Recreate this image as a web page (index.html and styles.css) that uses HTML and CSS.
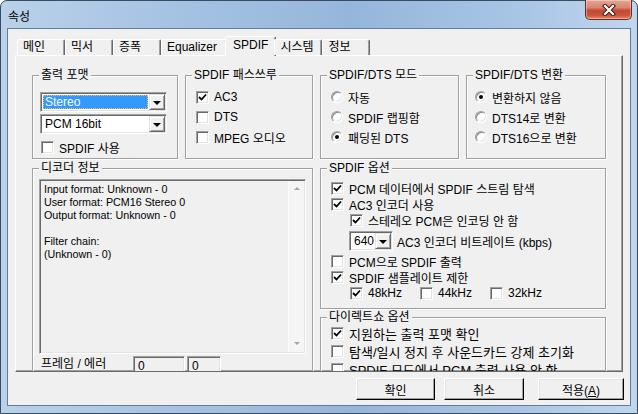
FILE: index.html
```html
<!DOCTYPE html>
<html lang="ko">
<head>
    <meta charset="UTF-8">
    <meta name="viewport" content="width=device-width, initial-scale=1.0">
    <title>속성</title>
    <link rel="stylesheet" href="styles.css">
</head>
<body>
<div class="window">
    <div class="titlebar">
        <span class="title">속성</span>
        <div class="close">
            <svg width="14" height="12" viewBox="0 0 14 12">
                <path d="M3 2 L11 10 M11 2 L3 10" stroke="#3b1a12" stroke-width="4.2" stroke-linecap="square"/>
                <path d="M3 2 L11 10 M11 2 L3 10" stroke="#fff" stroke-width="2.2" stroke-linecap="square"/>
            </svg>
        </div>
    </div>
    <div class="client">
        <div class="tabs">
            <div class="tab">메인</div>
            <div class="tab">믹서</div>
            <div class="tab">증폭</div>
            <div class="tab eq">Equalizer</div>
            <div class="tab active">SPDIF</div>
            <div class="tab">시스템</div>
            <div class="tab">정보</div>
        </div>
        <div class="page">
            <div class="row-top">
                <fieldset class="group">
                    <legend>출력 포맷</legend>
                    <div class="body g-format">
                        <div class="combo wide">
                            <span class="value focus">Stereo</span>
                            <span class="drop"><i></i></span>
                        </div>
                        <div class="combo wide second">
                            <span class="value">PCM 16bit</span>
                            <span class="drop"><i></i></span>
                        </div>
                        <div class="item use"><span class="box"></span>SPDIF 사용</div>
                    </div>
                </fieldset>
                <fieldset class="group">
                    <legend>SPDIF 패스쓰루</legend>
                    <div class="body g-list">
                        <div class="item"><span class="box"><svg viewBox="0 0 9 9"><path d="M1 4 L3.5 6.5 L8 1.5" fill="none" stroke="#000" stroke-width="1.8"/></svg></span>AC3</div>
                        <div class="item"><span class="box"></span>DTS</div>
                        <div class="item"><span class="box"></span>MPEG 오디오</div>
                    </div>
                </fieldset>
                <fieldset class="group">
                    <legend>SPDIF/DTS 모드</legend>
                    <div class="body g-list">
                        <div class="item"><span class="radio"></span>자동</div>
                        <div class="item"><span class="radio"></span>SPDIF 랩핑함</div>
                        <div class="item"><span class="radio on"></span>패딩된 DTS</div>
                    </div>
                </fieldset>
                <fieldset class="group">
                    <legend>SPDIF/DTS 변환</legend>
                    <div class="body g-list g-conv">
                        <div class="item"><span class="radio on"></span>변환하지 않음</div>
                        <div class="item"><span class="radio"></span>DTS14로 변환</div>
                        <div class="item"><span class="radio"></span>DTS16으로 변환</div>
                    </div>
                </fieldset>
            </div>
            <div class="row-bottom">
                <fieldset class="group decoder">
                    <legend>디코더 정보</legend>
                    <div class="body g-decoder">
                        <div class="listbox">
                            <div class="lines">
                                <div>Input format: Unknown - 0</div>
                                <div>User format: PCM16 Stereo 0</div>
                                <div>Output format: Unknown - 0</div>
                                <div>&nbsp;</div>
                                <div>Filter chain:</div>
                                <div>(Unknown - 0)</div>
                            </div>
                            <div class="vscroll">
                                <span class="arrow up"></span>
                                <span class="arrow down"></span>
                            </div>
                        </div>
                        <div class="frames">
                            <span class="frames-label">프레임 / 에러</span>
                            <span class="edit first">0</span>
                            <span class="edit">0</span>
                        </div>
                    </div>
                </fieldset>
                <div class="right-col">
                    <fieldset class="group options">
                        <legend>SPDIF 옵션</legend>
                        <div class="body g-options">
                            <div class="item"><span class="box"><svg viewBox="0 0 9 9"><path d="M1 4 L3.5 6.5 L8 1.5" fill="none" stroke="#000" stroke-width="1.8"/></svg></span>PCM 데이터에서 SPDIF 스트림 탐색</div>
                            <div class="item"><span class="box"><svg viewBox="0 0 9 9"><path d="M1 4 L3.5 6.5 L8 1.5" fill="none" stroke="#000" stroke-width="1.8"/></svg></span>AC3 인코더 사용</div>
                            <div class="item sub"><span class="box"><svg viewBox="0 0 9 9"><path d="M1 4 L3.5 6.5 L8 1.5" fill="none" stroke="#000" stroke-width="1.8"/></svg></span>스테레오 PCM은 인코딩 안 함</div>
                            <div class="item sub bitrate">
                                <div class="combo small">
                                    <span class="value">640</span>
                                    <span class="drop"><i></i></span>
                                </div>
                                AC3 인코더 비트레이트 (kbps)
                            </div>
                            <div class="item pcm"><span class="box"></span>PCM으로 SPDIF 출력</div>
                            <div class="item"><span class="box"><svg viewBox="0 0 9 9"><path d="M1 4 L3.5 6.5 L8 1.5" fill="none" stroke="#000" stroke-width="1.8"/></svg></span>SPDIF 샘플레이트 제한</div>
                            <div class="item sub rates">
                                <span class="rate"><span class="box"><svg viewBox="0 0 9 9"><path d="M1 4 L3.5 6.5 L8 1.5" fill="none" stroke="#000" stroke-width="1.8"/></svg></span>48kHz</span>
                                <span class="rate"><span class="box"></span>44kHz</span>
                                <span class="rate"><span class="box"></span>32kHz</span>
                            </div>
                        </div>
                    </fieldset>
                    <fieldset class="group dshow">
                        <legend>다이렉트쇼 옵션</legend>
                        <div class="body g-dshow">
                            <div class="item"><span class="box"><svg viewBox="0 0 9 9"><path d="M1 4 L3.5 6.5 L8 1.5" fill="none" stroke="#000" stroke-width="1.8"/></svg></span>지원하는 출력 포맷 확인</div>
                            <div class="item"><span class="box"></span>탐색/일시 정지 후 사운드카드 강제 초기화</div>
                            <div class="item"><span class="box"></span>SPDIF 모드에서 PCM 출력 사용 안 함</div>
                        </div>
                    </fieldset>
                </div>
            </div>
        </div>
        <div class="buttons">
            <button class="btn ok">확인</button>
            <button class="btn cancel">취소</button>
            <button class="btn apply">적용(<u>A</u>)</button>
        </div>
    </div>
</div>
</body>
</html>
```

FILE: styles.css
```css
*{
    box-sizing: border-box;
}
body{
    margin: 0;
    background: #fff;
    font: 12px "Liberation Sans", "Noto Sans CJK KR", sans-serif;
    color: #000;
}
.window{
    width: 638px;
    height: 414px;
    border: 1px solid #3b4b5e;
    border-radius: 7px 7px 0 0;
    padding: 0 6px 7px 6px;
    background: linear-gradient(90deg, #b9d1ea 0%, #a4c1e2 30%, #95b6db 55%, #a7c4e5 80%, #c0d6ee 100%);
    display: flex;
    flex-direction: column;
}
.titlebar{
    height: 27px;
    display: flex;
    align-items: center;
}
.title{
    margin-left: 1px;
    margin-top: 2px;
}
.close{
    margin-left: auto;
    margin-right: -1px;
    align-self: flex-start;
    margin-top: -1px;
    width: 47px;
    height: 20px;
    border: 1px solid #6f2a1e;
    border-top: none;
    border-radius: 0 0 5px 5px;
    background: linear-gradient(180deg, #e7a597 0%, #d88571 40%, #c34a33 55%, #c9553b 80%, #e1886a 100%);
    box-shadow: inset 0 0 0 1px rgba(255,255,255,0.35);
    display: flex;
    align-items: center;
    justify-content: center;
}
.client{
    flex: 1;
    border: 1px solid #657c98;
    background: #f0f0f0;
    padding: 7px 7px 0 7px;
    display: flex;
    flex-direction: column;
}

/* tabs */
.tabs{
    display: flex;
    align-items: flex-end;
    height: 19px;
    padding-left: 2px;
    position: relative;
    z-index: 1;
}
.tab{
    height: 16px;
    min-width: 48px;
    padding: 0 5px;
    line-height: 15px;
    border: 1px solid #fff;
    border-right: 1px solid #696969;
    border-bottom: none;
    box-shadow: inset -1px 0 #a0a0a0;
    border-radius: 2px 2px 0 0;
    background: #f0f0f0;
}
.tab.eq{
    padding-right: 9px;
}
.tab.active{
    height: 20px;
    margin: 0 -2px -1px -2px;
    padding: 0 7px;
    line-height: 16px;
}
.page{
    height: 317px;
    border: 1px solid #fff;
    border-right-color: #696969;
    border-bottom-color: #696969;
    box-shadow: inset -1px -1px #a0a0a0;
    padding: 12px 16px 0 16px;
    overflow: hidden;
}

/* group boxes */
.group{
    margin: 0;
    padding: 0;
    min-width: 0;
    border: 1px solid #a0a0a0;
    box-shadow: inset 1px 1px #fff, 1px 1px #fff;
}
.group legend{
    margin-left: 6px;
    padding: 0 2px;
    line-height: 14px;
    background: #f0f0f0;
}
.row-top{
    display: grid;
    grid-template-columns: 146px 128px 139px 140px;
    column-gap: 7px;
}
.row-top .group{
    height: 91px;
}
.row-bottom{
    display: grid;
    grid-template-columns: 281px 286px;
    column-gap: 7px;
    margin-top: 2px;
}
.decoder{
    height: 240px;
}
.options{
    height: 148px;
}
.dshow{
    height: 100px;
}

/* items */
.item{
    display: flex;
    align-items: center;
    height: 16px;
    white-space: nowrap;
}
.box{
    width: 13px;
    height: 13px;
    flex: none;
    margin-right: 5px;
    background: #fff;
    border: 1px solid;
    border-color: #a0a0a0 #fff #fff #a0a0a0;
    box-shadow: inset 1px 1px #696969, inset -1px -1px #e3e3e3;
    display: flex;
    align-items: center;
    justify-content: center;
}
.box svg{
    width: 9px;
    height: 9px;
}
.radio{
    width: 12px;
    height: 12px;
    flex: none;
    margin-right: 5px;
    border-radius: 50%;
    background: #fff;
    border: 1px solid;
    border-color: #a0a0a0 #fff #fff #a0a0a0;
    box-shadow: inset 1px 1px #8c8c8c, inset -1px -1px #e3e3e3;
    display: flex;
    align-items: center;
    justify-content: center;
}
.radio.on::after{
    content: "";
    width: 4px;
    height: 4px;
    border-radius: 50%;
    background: #000;
}

/* combo */
.combo{
    display: flex;
    height: 20px;
    background: #fff;
    border: 1px solid;
    border-color: #a0a0a0 #fff #fff #a0a0a0;
    box-shadow: inset 1px 1px #696969, inset -1px -1px #e3e3e3;
    padding: 2px;
}
.combo .value{
    flex: 1;
    line-height: 14px;
    padding-left: 2px;
}
.combo .value.focus{
    background: #3399ff;
    color: #fff;
    outline: 1px dotted #f9c14a;
    outline-offset: -1px;
    margin-right: 1px;
}
.drop{
    width: 16px;
    height: 16px;
    margin: -1px -1px 0 0;
    background: #f0f0f0;
    border: 1px solid;
    border-color: #e3e3e3 #696969 #696969 #e3e3e3;
    box-shadow: inset 1px 1px #fff, inset -1px -1px #a0a0a0;
    display: flex;
    align-items: center;
    justify-content: center;
}
.drop i{
    width: 0;
    height: 0;
    border-left: 4px solid transparent;
    border-right: 4px solid transparent;
    border-top: 4px solid #000;
    margin-top: 1px;
}

/* group contents */
.g-format{
    padding: 10px 9px 0 7px;
}
.combo.wide{
    width: 127px;
}
.combo.second{
    margin-top: 2px;
}
.item.use{
    margin-top: 5px;
    margin-left: 1px;
}
.g-list{
    padding: 5px 0 0 10px;
}
.g-list .item{
    height: 20px;
}
.g-conv{
    padding-left: 8px;
}
.g-decoder{
    padding: 4px 6px 0 6px;
}
.listbox{
    display: flex;
    height: 175px;
    background: #f0f0f0;
    border: 1px solid;
    border-color: #a0a0a0 #fff #fff #a0a0a0;
    box-shadow: inset 1px 1px #696969, inset -1px -1px #e3e3e3;
    padding: 2px;
}
.lines{
    flex: 1;
    padding: 1px 0 0 2px;
    font-size: 11.3px;
    line-height: 13px;
    white-space: nowrap;
    transform: scaleX(0.95);
    transform-origin: left top;
}
.vscroll{
    width: 16px;
    margin: -1px -1px -1px 0;
    background: #f5f5f5;
    border-left: 1px solid #fbfbfb;
    display: flex;
    flex-direction: column;
    justify-content: space-between;
    align-items: center;
    padding: 6px 0 7px 0;
}
.arrow{
    width: 0;
    height: 0;
    border-left: 3px solid transparent;
    border-right: 3px solid transparent;
}
.arrow.up{
    border-bottom: 3px solid #a3a3a3;
}
.arrow.down{
    border-top: 3px solid #a3a3a3;
}
.frames{
    display: flex;
    align-items: flex-start;
    margin-top: 2px;
}
.frames-label{
    width: 92px;
    margin-left: 2px;
    margin-top: 1px;
    line-height: 14px;
}
.edit{
    height: 20px;
    background: #f0f0f0;
    border: 1px solid;
    border-color: #a0a0a0 #fff #fff #a0a0a0;
    box-shadow: inset 1px 1px #696969, inset -1px -1px #e3e3e3;
    padding: 2px 0 0 4px;
    line-height: 14px;
    width: 34px;
    margin-left: 2px;
}
.edit.first{
    width: 52px;
    margin-left: 0;
}
.right-col{
    display: flex;
    flex-direction: column;
}
.g-options{
    padding: 5px 0 0 10px;
}
.item.sub{
    padding-left: 19px;
}
.item.bitrate{
    height: 20px;
    margin-top: 3px;
}
.combo.small{
    width: 44px;
    margin-left: -1px;
    margin-right: 4px;
}
.item.pcm{
    margin-top: 2px;
}
.rate{
    display: flex;
    align-items: center;
    width: 70px;
}
.dshow{
    margin-top: 1px;
}
.g-dshow{
    padding: 0 0 0 10px;
}
.g-dshow .item{
    height: 18px;
    font-size: 13px;
}

/* buttons */
.buttons{
    display: flex;
    justify-content: flex-end;
    margin-top: 6px;
    margin-right: -1px;
}
.btn{
    flex: none;
    height: 22px;
    width: 79px;
    padding: 0;
    font: inherit;
    color: #000;
    background: #f0f0f0;
    border: 1px solid;
    border-color: #fff #000 #000 #fff;
    box-shadow: inset -1px -1px #a0a0a0, inset 1px 1px #e3e3e3;
}
.btn.cancel{
    width: 80px;
    margin-left: 9px;
}
.btn.apply{
    width: 86px;
    margin-left: 14px;
}
```
